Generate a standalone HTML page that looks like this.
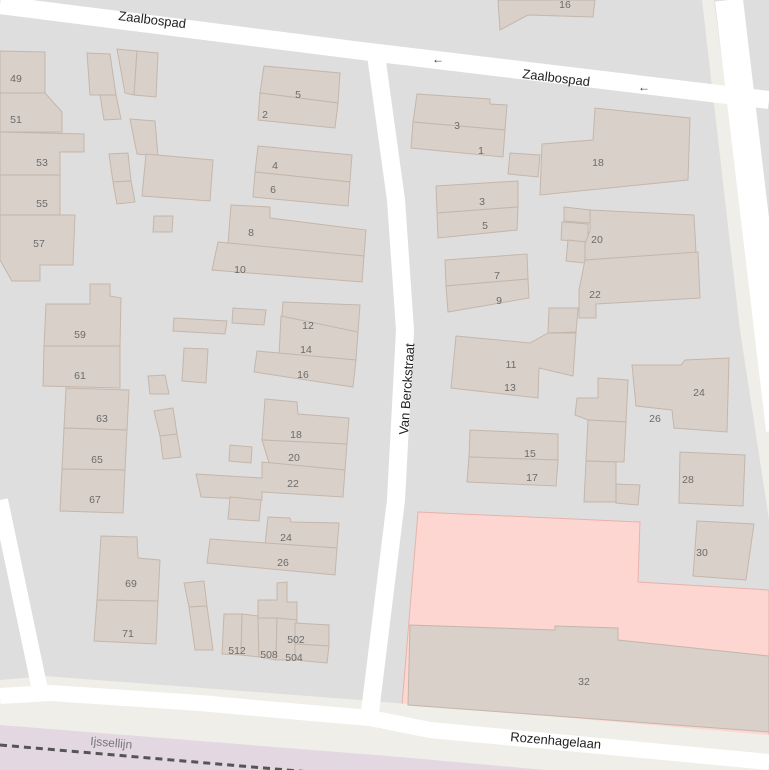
<!DOCTYPE html>
<html><head><meta charset="utf-8"><style>
html,body{margin:0;padding:0;background:#dfdede;}
svg{display:block}
text{font-family:"Liberation Sans",sans-serif;}
.b{fill:#d9d0c9;stroke:#c4b6ab;stroke-width:1}
.n{font-size:10.5px;fill:#6b6b6b;text-anchor:middle}
.r{font-size:13px;fill:#222}
</style></head><body>
<svg width="769" height="770" viewBox="0 0 769 770" xmlns="http://www.w3.org/2000/svg">
<rect width="769" height="770" fill="#dfdede"/>
<polygon points="418,512 640,522 638,582 769,590 769,738 402,705" fill="#fdd6d1" stroke="#e8b2ab" stroke-width="1"/>
<polygon points="45,676 360,700 769,735 769,770 0,770 0,680" fill="#efeee8"/>
<polygon points="0,725 400,757 769,790 769,770 0,770" fill="#e3d7e2"/>
<line x1="0" y1="745" x2="310" y2="772" stroke="#555" stroke-width="3" stroke-dasharray="7,5"/>
<text x="90" y="745" font-size="12" fill="#777" transform="rotate(5 90 745)">Ijssellijn</text>
<polygon points="702,0 714,0 769,420 769,520 740,330" fill="#efeee8"/>
<g stroke="#fff" fill="none" stroke-linejoin="round" stroke-linecap="butt">
<path d="M0,5 L370,52 L769,100" stroke-width="18"/>
<path d="M376,55 L396,200 L405,330 L396,500 L370,712" stroke-width="18"/>
<path d="M0,696 L50,693 L200,703 L300,712 L370,718 L430,730 L769,762" stroke-width="16"/>
<path d="M0,500 L40,690" stroke-width="16"/>
<path d="M729,0 L780,430" stroke-width="28"/>
</g>
<text class="r" x="118" y="20" transform="rotate(7 118 20)">Zaalbospad</text>
<text class="r" x="522" y="78" transform="rotate(7 522 78)">Zaalbospad</text>
<text x="432" y="63" font-size="12" fill="#333">←</text>
<text x="638" y="91" font-size="12" fill="#333">←</text>
<text class="r" x="408" y="435" transform="rotate(-86 408 435)">Van Berckstraat</text>
<text class="r" x="510" y="741" transform="rotate(5 510 741)">Rozenhagelaan</text>
<g class="b">
<polygon points="410,625 555,630 555,626 618,628 618,640 769,656 769,732 408,705"/>
<polygon points="498,0 595,0 593,17 528,15 500,30"/>
<polygon points="0,51 45,52 45,93 0,93"/><polygon points="0,93 45,93 62,112 62,132 0,132"/>
<polygon points="0,132 84,134 84,152 60,152 60,175 0,175"/><polygon points="0,175 60,175 60,215 0,215"/>
<polygon points="0,215 75,215 73,265 40,265 40,281 12,281 0,260"/>
<polygon points="87,53 110,54 116,95 90,95"/><polygon points="100,95 116,95 121,119 104,120"/>
<polygon points="117,49 137,51 134,95 125,93"/><polygon points="137,51 158,53 156,97 134,95"/>
<polygon points="130,119 155,121 158,156 137,154"/>
<polygon points="109,154 128,153 131,181 113,182"/><polygon points="113,182 131,181 135,202 117,204"/>
<polygon points="146,154 213,160 210,201 142,196"/>
<polygon points="154,216 173,216 172,232 153,232"/>
<polygon points="264,66 340,73 338,103 260,93"/><polygon points="260,93 338,103 335,128 258,120"/>
<polygon points="258,146 352,155 350,182 255,172"/><polygon points="255,172 350,182 348,206 253,197"/>
<polygon points="231,205 270,207 270,218 366,230 364,256 228,244"/>
<polygon points="218,242 364,256 362,282 212,270"/>
<polygon points="46,304 90,304 90,284 110,284 110,296 121,298 120,346 44,346"/>
<polygon points="44,346 120,346 120,388 43,386"/>
<polygon points="66,388 129,390 127,430 64,428"/><polygon points="64,428 127,430 125,470 62,469"/>
<polygon points="62,469 125,470 123,513 60,511"/>
<polygon points="174,318 227,321 225,334 173,331"/><polygon points="233,308 266,310 264,325 232,323"/>
<polygon points="283,302 360,305 358,332 281,330"/><polygon points="281,316 358,332 356,360 279,356"/>
<polygon points="257,351 356,360 353,387 254,372"/>
<polygon points="184,348 208,349 206,383 182,381"/><polygon points="148,376 165,375 169,394 150,394"/>
<polygon points="154,411 173,408 177,434 160,436"/><polygon points="160,436 177,434 181,457 163,459"/>
<polygon points="265,399 297,402 298,414 349,418 347,444 262,440"/>
<polygon points="262,440 347,444 345,470 270,466"/><polygon points="196,474 262,478 262,462 345,470 343,497 262,492 262,500 201,497"/>
<polygon points="230,445 252,447 251,463 229,461"/><polygon points="230,497 261,500 259,521 228,519"/>
<polygon points="268,517 290,518 291,522 339,523 337,548 265,545"/>
<polygon points="210,539 337,548 335,575 207,563"/>
<polygon points="101,536 137,537 138,558 160,560 158,601 97,600"/>
<polygon points="97,600 158,601 156,644 94,641"/>
<polygon points="184,583 204,581 207,606 189,607"/><polygon points="189,607 207,606 213,650 195,650"/>
<polygon points="277,583 287,582 287,602 297,602 297,620 258,618 258,600 277,600"/>
<polygon points="224,614 242,614 241,655 222,654"/><polygon points="242,614 258,616 259,657 241,655"/>
<polygon points="258,618 277,618 276,660 259,657"/><polygon points="277,618 297,620 295,660 276,660"/>
<polygon points="295,623 329,625 329,646 295,644"/><polygon points="295,644 329,646 327,663 295,660"/>
<polygon points="417,94 490,99 490,104 507,105 505,130 413,122"/>
<polygon points="413,122 505,130 503,157 411,148"/>
<polygon points="510,153 540,155 538,177 508,174"/>
<polygon points="595,108 690,118 688,180 540,195 542,144 593,140"/>
<polygon points="436,186 518,181 518,207 437,213"/><polygon points="437,213 518,207 517,230 438,238"/>
<polygon points="564,207 590,210 590,223 564,221"/><polygon points="562,222 588,224 588,242 561,240"/>
<polygon points="568,240 586,242 585,263 566,261"/>
<polygon points="590,210 694,215 696,253 585,260 585,244 590,230"/>
<polygon points="585,260 698,252 700,298 596,304 596,318 579,318 579,290"/>
<polygon points="445,260 527,254 528,279 446,286"/><polygon points="446,286 528,279 529,298 448,312"/>
<polygon points="549,308 578,308 576,332 548,333"/>
<polygon points="456,336 530,343 548,333 576,333 573,376 539,368 538,398 451,388"/>
<polygon points="470,430 558,434 558,460 469,457"/><polygon points="469,457 558,460 556,486 467,482"/>
<polygon points="598,378 628,380 626,422 588,420 575,415 577,398 598,398"/>
<polygon points="588,420 626,422 624,462 586,461"/><polygon points="586,461 616,462 616,502 584,502"/>
<polygon points="616,484 640,485 638,505 616,503"/>
<polygon points="632,365 681,365 685,360 729,358 727,432 674,428 672,410 636,406"/>
<polygon points="680,452 745,455 743,506 679,503"/>
<polygon points="697,521 754,524 746,580 693,576"/>
</g>
<g class="n">
<text x="16" y="82">49</text><text x="16" y="123">51</text><text x="42" y="166">53</text><text x="42" y="207">55</text><text x="39" y="247">57</text>
<text x="298" y="98">5</text><text x="265" y="118">2</text><text x="275" y="169">4</text><text x="273" y="193">6</text>
<text x="251" y="236">8</text><text x="240" y="273">10</text>
<text x="80" y="338">59</text><text x="80" y="379">61</text><text x="102" y="422">63</text><text x="97" y="463">65</text><text x="95" y="503">67</text>
<text x="308" y="329">12</text><text x="306" y="353">14</text><text x="303" y="378">16</text>
<text x="296" y="438">18</text><text x="294" y="461">20</text><text x="293" y="487">22</text>
<text x="286" y="541">24</text><text x="283" y="566">26</text>
<text x="131" y="587">69</text><text x="128" y="637">71</text>
<text x="237" y="654">512</text><text x="269" y="658">508</text><text x="296" y="643">502</text><text x="294" y="661">504</text>
<text x="565" y="8">16</text>
<text x="457" y="129">3</text><text x="481" y="154">1</text><text x="598" y="166">18</text>
<text x="482" y="205">3</text><text x="485" y="229">5</text>
<text x="597" y="243">20</text><text x="595" y="298">22</text>
<text x="497" y="279">7</text><text x="499" y="304">9</text>
<text x="511" y="368">11</text><text x="510" y="391">13</text>
<text x="530" y="457">15</text><text x="532" y="481">17</text>
<text x="699" y="396">24</text><text x="655" y="422">26</text><text x="688" y="483">28</text><text x="702" y="556">30</text>
<text x="584" y="685">32</text>
</g>
</svg>
</body></html>
